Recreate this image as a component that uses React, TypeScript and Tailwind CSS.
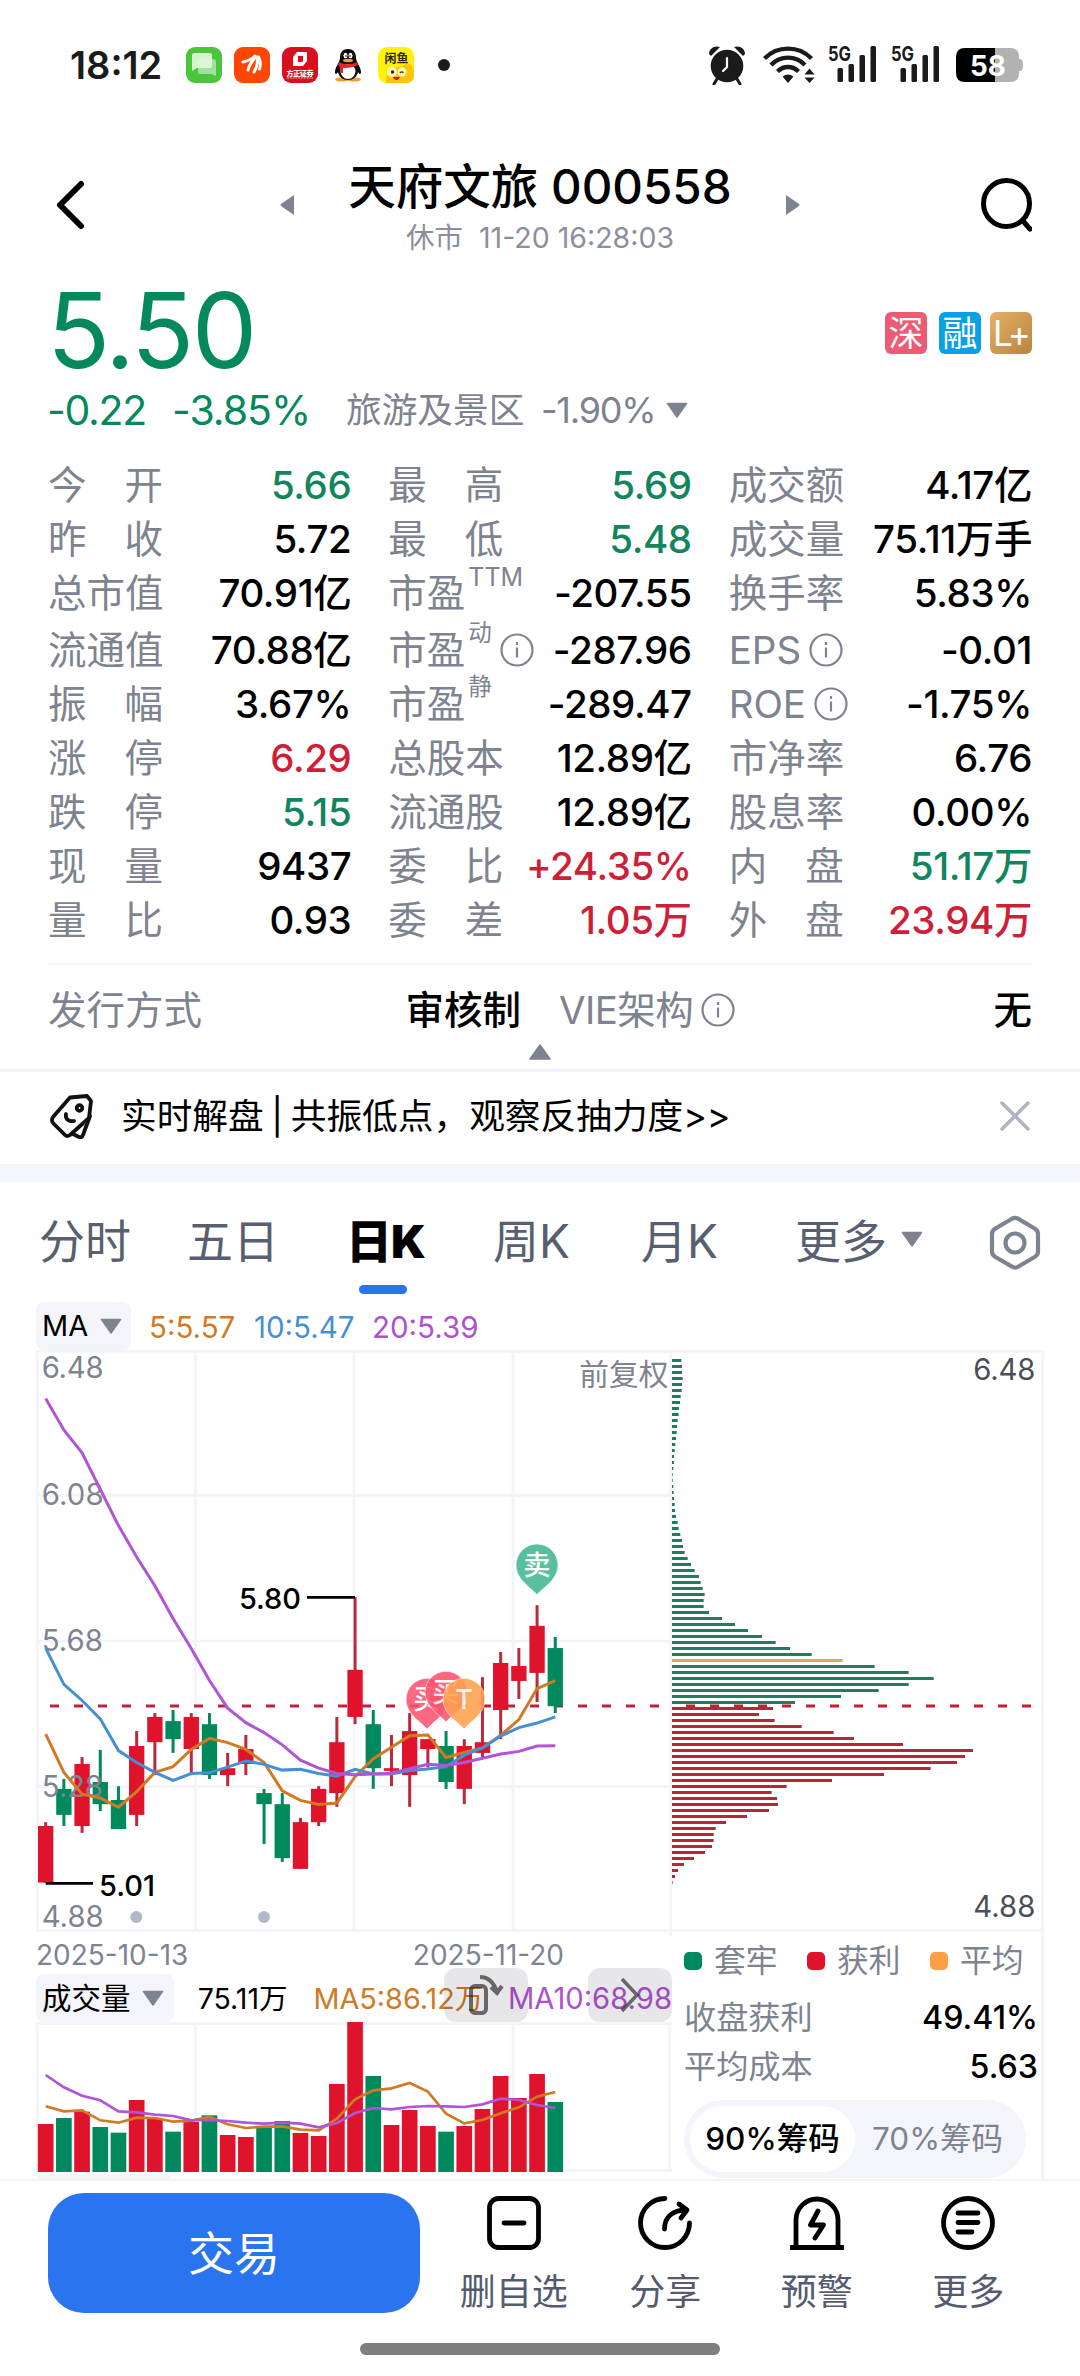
import { useState } from "react";

const UP = "#e0132c";
const DOWN = "#00895c";
const STEP = 54.6;
const FIRST = 137;
// price chart data is stored on a compressed vertical scale
const PRICE_SCALE = 1.148;

type Tone = "up" | "down" | "plain";

type Stat = {
  label: string;
  value: string;
  tone?: Tone;
  sup?: string;
  info?: boolean;
};

const statRows: Stat[][] = [
  [{ label: "今开", value: "5.66", tone: "down" }, { label: "最高", value: "5.69", tone: "down" }, { label: "成交额", value: "4.17亿" }],
  [{ label: "昨收", value: "5.72" }, { label: "最低", value: "5.48", tone: "down" }, { label: "成交量", value: "75.11万手" }],
  [{ label: "总市值", value: "70.91亿" }, { label: "市盈", sup: "TTM", value: "-207.55" }, { label: "换手率", value: "5.83%" }],
  [{ label: "流通值", value: "70.88亿" }, { label: "市盈", sup: "动", info: true, value: "-287.96" }, { label: "EPS", info: true, value: "-0.01" }],
  [{ label: "振幅", value: "3.67%" }, { label: "市盈", sup: "静", value: "-289.47" }, { label: "ROE", info: true, value: "-1.75%" }],
  [{ label: "涨停", value: "6.29", tone: "up" }, { label: "总股本", value: "12.89亿" }, { label: "市净率", value: "6.76" }],
  [{ label: "跌停", value: "5.15", tone: "down" }, { label: "流通股", value: "12.89亿" }, { label: "股息率", value: "0.00%" }],
  [{ label: "现量", value: "9437" }, { label: "委比", value: "+24.35%", tone: "up" }, { label: "内盘", value: "51.17万", tone: "down" }],
  [{ label: "量比", value: "0.93" }, { label: "委差", value: "1.05万", tone: "up" }, { label: "外盘", value: "23.94万", tone: "up" }],
];

// up?, wick top, body top, body bottom, wick bottom
const candles: [number, number, number, number, number][] = [
  [1, 1260, 1270, 1418, 1418],
  [0, 1147, 1173, 1241, 1270],
  [1, 1090, 1108, 1270, 1288],
  [0, 1071, 1155, 1213, 1231],
  [0, 1166, 1202, 1278, 1278],
  [1, 1022, 1061, 1241, 1270],
  [1, 975, 985, 1051, 1137],
  [0, 967, 996, 1043, 1079],
  [1, 975, 985, 1069, 1137],
  [0, 975, 1004, 1137, 1147],
  [1, 1079, 1119, 1137, 1166],
  [1, 1032, 1069, 1108, 1137],
  [0, 1173, 1184, 1213, 1317],
  [0, 1184, 1213, 1354, 1364],
  [1, 1249, 1260, 1382, 1382],
  [1, 1166, 1173, 1260, 1270],
  [1, 985, 1051, 1184, 1220],
  [1, 672, 862, 985, 1004],
  [0, 967, 1004, 1119, 1173],
  [1, 1032, 1119, 1126, 1166],
  [1, 975, 1022, 1137, 1220],
  [1, 1043, 1043, 1069, 1117],
  [0, 1022, 1061, 1155, 1173],
  [1, 1043, 1061, 1173, 1213],
  [1, 881, 1051, 1079, 1090],
  [1, 815, 844, 967, 1043],
  [1, 805, 852, 891, 938],
  [1, 693, 747, 870, 946],
  [0, 776, 805, 957, 975],
];

const ma5 = [1030, 1130, 1187, 1197, 1221, 1180, 1130, 1115, 1070, 1041, 1052, 1070, 1104, 1178, 1203, 1214, 1210, 1141, 1094, 1064, 1034, 1032, 1091, 1078, 1066, 1033, 992, 911, 890];
const ma10 = [805, 900, 942, 990, 1073, 1104, 1130, 1151, 1133, 1131, 1116, 1100, 1109, 1124, 1122, 1133, 1140, 1122, 1134, 1134, 1125, 1121, 1115, 1085, 1066, 1035, 1013, 1001, 985];
const ma20 = [153, 235, 295, 390, 485, 567, 642, 728, 806, 890, 962, 1000, 1026, 1058, 1098, 1119, 1133, 1136, 1134, 1132, 1120, 1109, 1112, 1104, 1093, 1082, 1075, 1061, 1060];

const volumeTops = [612, 594, 575, 621, 638, 540, 597, 635, 606, 586, 645, 651, 618, 603, 639, 648, 492, 306, 468, 615, 570, 618, 635, 618, 567, 468, 534, 462, 546];
const volMa5 = [559, 574, 571, 601, 608, 593, 594, 605, 602, 591, 613, 624, 620, 619, 629, 631, 596, 538, 511, 505, 489, 515, 581, 610, 600, 580, 562, 530, 516];
const volMa10 = [465, 502, 527, 541, 574, 577, 584, 588, 601, 600, 603, 608, 611, 608, 611, 622, 609, 579, 564, 568, 561, 558, 559, 561, 553, 536, 540, 555, 564];

const chips = [
  28, 30, 30, 32, 30, 29, 26, 24, 21, 20, 17, 15, 14, 12, 10, 8, 6, 6, 4, 2, 2, 4, 5, 6, 8, 9, 12, 17, 20, 25, 30, 33, 38, 47, 57, 68, 81, 86, 92, 98,
  95, 95, 111, 150, 189, 228, 270, 311, 354, 419, 512, 608, 710, 785, 710, 620, 507, 369, 303, 261, 308, 389, 485, 546, 693, 903, 879, 855, 776, 636,
  480, 344, 299, 315, 318, 291, 225, 162, 131, 125, 125, 120, 99, 66, 36, 18, 9, 2,
];
const AVG_CHIP = 50;
const CLOSE_CHIP = 58;

const toPoints = (ys: number[], scale = 1) => ys.map((y, i) => `${FIRST + STEP * i},${y * scale}`).join(" ");

const toneClass = (tone?: Tone) => {
  switch (tone) {
    case "up": return "text-[#cf1f38]";
    case "down": return "text-[#12855c]";
    default: return "text-black";
  }
};

function InfoIcon() {
  return (
    <svg className="w-[34px] h-[34px] shrink-0" viewBox="0 0 34 34" fill="none" stroke="#7e8390" strokeWidth="2.2">
      <circle cx="17" cy="17" r="15.5" />
      <path d="M17 14.5v10M17 9v3" />
    </svg>
  );
}

function Triangle({ up = false }: { up?: boolean }) {
  return (
    <svg className="w-[22px] h-4 shrink-0" viewBox="0 0 22 16" fill="#7e8390" stroke="#7e8390" strokeWidth="1.5" strokeLinejoin="round">
      <path d={up ? "M11 1 21 15H1z" : "M1.5 1.5h19L11 15z"} />
    </svg>
  );
}

function Signal() {
  return (
    <svg className="block w-[50px] h-[42px] overflow-visible" viewBox="0 0 50 42" fill="#1b1b1b">
      <text x="0" y="17" fontSize="20.5" fontWeight="700" textLength="23" lengthAdjust="spacingAndGlyphs">5G</text>
      <rect x="9.5" y="24" width="5.5" height="14" rx="1.5" />
      <rect x="20.5" y="20" width="5.5" height="18" rx="1.5" />
      <rect x="31.5" y="11" width="5.5" height="27" rx="1.5" />
      <rect x="42.5" y="2" width="5.5" height="36" rx="1.5" />
    </svg>
  );
}

function StatusBar() {
  return (
    <div className="h-[130px] pl-[70px] pr-[57px] flex items-center justify-between">
      <div className="flex items-center">
        <span className="w-[116px] text-[38px] font-semibold text-[#1b1b1b]">18:12</span>
        <svg className="w-[36px] h-[36px] mr-3" viewBox="0 0 36 36">
          <rect width="36" height="36" rx="9" fill="#4bc53c" />
          <path d="M14 12h13a3 3 0 0 1 3 3v14l-5-2H14a2 2 0 0 1-2-2V14a2 2 0 0 1 2-2z" fill="#9fe29b" />
          <path d="M8 6h16a2 2 0 0 1 2 2v11a2 2 0 0 1-2 2H11l-5 3V8a2 2 0 0 1 2-2z" fill="#e3f8e0" opacity=".9" />
        </svg>
        <svg className="w-[36px] h-[36px] mr-3" viewBox="0 0 36 36">
          <rect width="36" height="36" rx="9" fill="#ff4603" />
          <g fill="none" stroke="#fff" strokeWidth="3" strokeLinecap="round">
            <path d="M9 15c5-1 9-3 12-6" />
            <path d="M14 23c1-5 4-9 8-13" />
            <path d="M20 25c3-5 4-10 3.500-15" />
            <path d="M25.500 22c1.500-4 1-8-1-12" />
          </g>
        </svg>
        <svg className="w-[36px] h-[36px] mr-3" viewBox="0 0 36 36">
          <rect width="36" height="36" rx="9" fill="#d90f1e" />
          <path d="M15 5h10v9l-4 5H11V10zM16 9v6h4l1-1V9z" fill="#fff" fillRule="evenodd" />
          <text x="4.5" y="28.5" fontSize="7" fontWeight="900" fill="#fff" textLength="27">方正证券</text>
          <path d="M5 31h26" stroke="#fff" strokeWidth="1" strokeDasharray="2 .8" opacity=".7" />
        </svg>
        <svg className="w-[36px] h-[36px] mr-3" viewBox="0 0 36 36">
          <ellipse cx="12" cy="32.5" rx="7" ry="2" fill="#eaa22a" />
          <ellipse cx="24" cy="32.5" rx="7" ry="2" fill="#eaa22a" />
          <path d="M18 2c6 0 8 4 8 9 0 4 5 9 5 14 0 3-2 2-3 0-1 5-5 8-10 8S9 30 8 25c-1 2-3 3-3 0 0-5 5-10 5-14 0-5 2-9 8-9z" fill="#0b0b0b" />
          <ellipse cx="18" cy="24.5" rx="7.5" ry="7.5" fill="#fff" />
          <ellipse cx="15.5" cy="8.5" rx="2" ry="2.7" fill="#fff" />
          <ellipse cx="20.5" cy="8.5" rx="2" ry="2.7" fill="#fff" />
          <circle cx="16" cy="9" r=".8" />
          <circle cx="20" cy="9" r=".8" />
          <ellipse cx="18" cy="13.5" rx="5" ry="1.7" fill="#f5a623" />
          <path d="M9 15c5 3 13 3 18 0l1 3c-6 3-13 3-15 3v5h-3v-6l-2-2z" fill="#e1262c" />
        </svg>
        <svg className="w-[36px] h-[36px]" viewBox="0 0 36 36">
          <rect width="36" height="36" rx="9" fill="#fff20a" />
          <path d="M8 36C8 24 14 20 21 20c5 0 5-4 10-3 3 1 5 4 5 8v4q0 7-8 7z" fill="#ffc40e" />
          <circle cx="14" cy="25" r="5" fill="#fff7b5" />
          <circle cx="24" cy="25" r="4.5" fill="#fff7b5" />
          <circle cx="14.5" cy="25" r="1.7" fill="#3a2200" />
          <path d="M22 26c1-2 3-1 3 0" stroke="#3a2200" fill="none" strokeWidth="1.3" />
          <path d="M15 30h7c-1 4-6 4-7 0z" fill="#c3261b" />
          <text x="6.5" y="15.5" fontSize="12" fontWeight="700" fill="#2c2803" textLength="24">闲鱼</text>
        </svg>
        <span className="ml-6 w-3 h-3 rounded-full bg-[#1b1b1b]" />
      </div>
      <div className="flex items-center">
        <svg className="w-[38px] h-[40px] mr-[17px]" viewBox="0 0 38 40" fill="#1b1b1b">
          <circle cx="19" cy="21" r="16.3" />
          <path d="M1 9C1 4 6 0 12 2L3 11z" />
          <path d="M37 9c0-5-5-9-11-7l9 9z" />
          <path d="m9 34-3 5M29 34l3 5" stroke="#1b1b1b" strokeWidth="3" strokeLinecap="round" />
          <path d="M19 13v9l-4 4" stroke="#fff" strokeWidth="2.2" fill="none" strokeLinecap="round" />
        </svg>
        <svg className="w-[52px] h-[38px] mr-[13px]" viewBox="0 0 52 38" fill="none" stroke="#1b1b1b" strokeWidth="4.3">
          <path d="M1.5 12.5a33 33 0 0 1 47 0" />
          <path d="M8 19a23.5 23.5 0 0 1 34 0" />
          <path d="M14.5 25.5a14.5 14.5 0 0 1 21 0" />
          <path d="m25 37-5.5-6.5q5.5-4 11 0zM46.5 22.5l5 6h-10zM46.5 37l5-5.5h-10z" fill="#1b1b1b" stroke="none" />
        </svg>
        <span className="mr-[13px]"><Signal /></span>
        <span className="mr-[15px]"><Signal /></span>
        <svg className="w-[67px] h-[34px]" viewBox="0 0 67 34">
          <path d="M39 0h15q9 0 9 9v2h1q3 0 3 6t-3 6h-1v2q0 9-9 9H39z" fill="#b2b2b2" />
          <path d="M9 0h30v34H9q-9 0-9-9V9q0-9 9-9z" />
          <text x="14" y="27.5" fontSize="29" fontWeight="700" fill="#fff" textLength="36" lengthAdjust="spacingAndGlyphs">58</text>
        </svg>
      </div>
    </div>
  );
}

function Header() {
  return (
    <div className="h-[150px] px-12 flex items-center justify-between">
      <svg className="w-[54px] h-[54px]" viewBox="0 0 54 54" fill="none" stroke="#000" strokeWidth="6" strokeLinecap="round" strokeLinejoin="round">
        <path d="M33 6 12 27l21 21" />
      </svg>
      <div className="flex items-center justify-between w-[520px] h-[112px]">
        <svg className="w-[14px] h-5" viewBox="0 0 14 20" fill="#7e8390"><path d="M14 0v20L1 11q-1-1 0-2z" /></svg>
        <div className="flex flex-col items-center pt-[3px]">
          <h1 className="h-[62px] leading-[62px] text-[47.5px] font-medium text-black whitespace-nowrap">天府文旅 000558</h1>
          <p className="h-10 leading-10 text-[28.5px] text-[#8b8f9b]">休市&nbsp; 11-20 16:28:03</p>
        </div>
        <svg className="w-[14px] h-5" viewBox="0 0 14 20" fill="#7e8390"><path d="M0 0v20l13-9q1-1 0-2z" /></svg>
      </div>
      <svg className="w-[54px] h-[58px]" viewBox="0 0 54 58" fill="none" stroke="#000" strokeWidth="5" strokeLinecap="round">
        <circle cx="28.5" cy="27.5" r="23" />
        <path d="m45 45 7 8" />
      </svg>
    </div>
  );
}

function Quote() {
  return (
    <div className="h-[178px] pl-[47px] pr-12">
      <div className="flex items-center justify-between h-[104px]">
        <span className="h-[104px] text-[104px] leading-[100px] tracking-[-2.5px] text-[#03895b]">5.50</span>
        <div className="flex text-white text-[35px] leading-[42px] text-center mt-0.5">
          <span className="w-[42px] h-[42px] rounded-md bg-[#ec5a73] mr-3">深</span>
          <span className="w-[42px] h-[42px] rounded-md bg-[#0aa0e6] mr-[9px]">融</span>
          <span className="w-[42px] h-[42px] rounded-md bg-linear-to-br from-[#e8b067] to-[#b9843f] tracking-[-2px]">L+</span>
        </div>
      </div>
      <div className="flex items-center h-[52px] leading-[48px]">
        <span className="w-[125px] text-[41px] tracking-[-1.3px] text-[#03895b]">-0.22</span>
        <span className="w-[174px] text-[41px] tracking-[-1px] text-[#03895b]">-3.85%</span>
        <span className="w-[195px] text-[35.7px] text-[#7e8390]">旅游及景区</span>
        <span className="w-[125px] text-[36px] tracking-[-1.2px] text-[#7e8390]">-1.90%</span>
        <Triangle />
      </div>
    </div>
  );
}

function StatCell({ stat }: { stat: Stat }) {
  const spread = stat.label.length === 2 && !stat.sup;
  return (
    <div className="flex items-center justify-between h-[54px]">
      <div className="flex items-center h-[54px] text-[#7e8390]">
        {spread ? (
          <span className="flex justify-between w-[115px]"><span>{stat.label[0]}</span><span>{stat.label[1]}</span></span>
        ) : (
          <span>{stat.label}</span>
        )}
        {stat.sup && <span className={stat.sup === "TTM" ? "self-start ml-[3px] text-[25px] leading-[22px]" : "self-start ml-[3px] text-[23.5px] leading-[20px]"}>{stat.sup}</span>}
        {stat.info && <span className="ml-2"><InfoIcon /></span>}
      </div>
      <span className={`font-medium tracking-[-0.4px] ${toneClass(stat.tone)}`}>{stat.value}</span>
    </div>
  );
}

function Stats() {
  return (
    <div className="px-12 h-[505px] text-[38.5px] leading-[54px] whitespace-nowrap">
      {statRows.map((row, i) => (
        <div key={i} className={i === 3 ? "grid grid-cols-3 gap-x-[37px] h-[54px] mt-[3px]" : "grid grid-cols-3 gap-x-[37px] h-[54px]"}>
          {row.map((stat) => <StatCell key={stat.label + (stat.sup ?? "")} stat={stat} />)}
        </div>
      ))}
    </div>
  );
}

function IssueInfo() {
  return (
    <div className="h-[106px]">
      <div className="mx-12 border-t-2 border-[#f3f4f7] h-[78px] pt-[18px] grid grid-cols-2 gap-x-[38px] text-[38.5px] leading-[54px]">
        <div className="flex justify-between">
          <span className="text-[#7e8390]">发行方式</span>
          <span className="font-medium">审核制</span>
        </div>
        <div className="flex justify-between">
          <span className="flex items-center h-[54px] gap-2 text-[#7e8390]"><span className="tracking-[-0.6px]">VIE架构</span><InfoIcon /></span>
          <span className="font-medium">无</span>
        </div>
      </div>
      <div className="flex justify-center mt-[3px]"><Triangle up /></div>
    </div>
  );
}

function NewsStrip() {
  return (
    <div className="h-[95px] border-t-3 border-[#f3f4f7] px-[50px] pb-1 flex items-center">
      <svg className="w-[43px] h-[45px] mr-[28px]" viewBox="0 0 43 45" fill="none" stroke="#111" strokeWidth="3.8" strokeLinejoin="round" strokeLinecap="round">
        <path d="M20 3.5 37 2l4 5-2 17-19 17q-3 2-5 0L3 29q-2-3 0-6z" />
        <path d="m40 22-7 19q-1 3-4 2l-6-3" />
        <circle cx="29.5" cy="14" r="2.8" />
        <path d="M16 20c-1 5 3 8 8 7" />
      </svg>
      <p className="flex-1 text-[35.7px] leading-[50px] text-black whitespace-nowrap [word-spacing:-2.5px]">实时解盘 | 共振低点，观察反抽力度&gt;&gt;</p>
      <svg className="w-[30px] h-[30px]" viewBox="0 0 30 30" stroke="#adb3c1" strokeWidth="3.5" strokeLinecap="round"><path d="m2 2 26 26M28 2 2 28" /></svg>
    </div>
  );
}

const tabs = [
  { name: "分时", cell: "w-[148px]" },
  { name: "五日", cell: "w-[159px]" },
  { name: "日K", cell: "w-[147px]" },
  { name: "周K", cell: "w-[148px]" },
  { name: "月K", cell: "w-[154px]" },
  { name: "更多", cell: "w-[106px]" },
];

function Tabs() {
  const [active, setActive] = useState("日K");
  return (
    <div className="h-[120px] pl-[39px] pr-[39px] pb-0.5 flex items-center">
      {tabs.map((tab) => (
        <button key={tab.name} onClick={() => setActive(tab.name)} className={`${tab.cell} relative text-left text-[46px] leading-[66px] whitespace-nowrap`}>
          <span className={active === tab.name ? "font-black tracking-[-1px] text-black" : "text-[#585f70]"}>{tab.name}</span>
          {active === tab.name && <span className="absolute left-[13px] top-[77px] w-12 h-[9px] rounded-full bg-[#2b74f0]" />}
        </button>
      ))}
      <span className="-mt-1"><Triangle /></span>
      <svg className="w-[52px] h-[56px] ml-auto mt-1" viewBox="0 0 52 56" fill="none" stroke="#7e8390" strokeWidth="4.2" strokeLinejoin="round">
        <path d="M23 3.7q3-1.7 6 0l17 10q3 2 3 5v18q0 3-3 5l-17 10q-3 1.7-6 0l-17-10q-3-2-3-5v-18q0-3 3-5z" />
        <circle cx="26" cy="28" r="9.5" />
      </svg>
    </div>
  );
}

function MaRow() {
  return (
    <div className="flex items-center h-12 pl-9 text-[29.5px] leading-[50px]">
      <div className="flex items-center justify-between w-[95px] h-12 pl-[6px] pr-[9px] rounded-lg bg-[#f3f5fa] mr-[18px] text-[29px]">MA <Triangle /></div>
      <span className="w-[105px] pt-0.5 text-[#cf7a26]">5:5.57</span>
      <span className="w-[118px] pt-0.5 text-[#478fd4]">10:5.47</span>
      <span className="pt-0.5 text-[#ad52cf]">20:5.39</span>
    </div>
  );
}

function Pin({ x, y, fill, text }: { x: number; y: number; fill: string; text: string }) {
  return (
    <g transform={`translate(${x} ${y})`} opacity=".88">
      <path d="M0 89C-20 66-63 44-63 0a63 63 0 0 1 126 0c0 44-43 66-63 89z" fill={fill} stroke="#fff" strokeWidth="3" strokeOpacity=".6" />
      <text y="30" textAnchor="middle" fontSize="82" fontWeight="500" fill="#fff">{text}</text>
    </g>
  );
}

function KLineChart() {
  return (
    <svg className="block w-[672px] h-[596px]" viewBox="0 0 2016 1788">
      <g stroke="#f3f4f9" strokeWidth="8" fill="none">
        <path d="M108 34H2016M108 466H2008M108 903H2008M108 1340H2008M108 1771H2016" />
        <path d="M112 34V1771M586 34V1771M1062 34V1771M1539 34V1771M2012 34V1788" />
      </g>
      <path d="M150 1098H2008" stroke="#bd2238" strokeWidth="9" strokeDasharray="27 45" />
      {candles.map(([up, high, top, bottom, low], i) => {
        const x = FIRST + STEP * i;
        return (
          <g key={i} fill={up ? UP : DOWN}>
            <rect x={x - 4.5} y={high * PRICE_SCALE} width="9" height={(low - high) * PRICE_SCALE} fill={up ? "#b92a3c" : DOWN} />
            <rect x={x - 23} y={top * PRICE_SCALE} width="46" height={(bottom - top) * PRICE_SCALE} />
          </g>
        );
      })}
      <g fontSize="88" fill="#7e8390">
        <text x="125" y="115" textLength="186">6.48</text>
        <text x="125" y="496" textLength="186">6.08</text>
        <text x="125" y="934" textLength="184">5.68</text>
        <text x="125" y="1370" textLength="184">5.28</text>
        <text x="125" y="1762" textLength="186">4.88</text>
        <text x="1738" y="136" fontSize="89">前复权</text>
      </g>
      <g fill="none" strokeWidth="9">
        <polyline points={toPoints(ma5, PRICE_SCALE)} stroke="#d17a23" />
        <polyline points={toPoints(ma10, PRICE_SCALE)} stroke="#478fd4" />
        <polyline points={toPoints(ma20, PRICE_SCALE)} stroke="#b254d6" />
      </g>
      <path d="M921 772H1065M137 1630H279" stroke="#000" strokeWidth="8" />
      <g fontSize="87" fontWeight="500">
        <text x="717" y="808" textLength="186">5.80</text>
        <text x="297" y="1668" textLength="168">5.01</text>
      </g>
      <circle cx="409" cy="1731" r="18" fill="#b3b8c7" />
      <circle cx="792" cy="1731" r="18" fill="#b3b8c7" />
      <Pin x={1281} y={1078} fill="#fb5570" text="买" />
      <Pin x={1338} y={1057} fill="#fb5570" text="买" />
      <Pin x={1392} y={1078} fill="#ffa14f" text="T" />
      <Pin x={1611} y={675} fill="#42b891" text="卖" />
    </svg>
  );
}

function VolumeChart() {
  return (
    <svg className="block w-[672px] h-[151px]" viewBox="0 306 2016 453">
      <g stroke="#f3f4f9" strokeWidth="8" fill="none">
        <path d="M108 311H2016M108 752H2016M112 311V752M586 311V752M1062 311V752M1539 311V752M2008 311V752" />
      </g>
      {volumeTops.map((top, i) => (
        <rect key={i} x={FIRST + STEP * i - 23.5} y={top} width="47" height={756 - top} fill={candles[i][0] ? UP : DOWN} />
      ))}
      <g fill="none" strokeWidth="8">
        <polyline points={toPoints(volMa5)} stroke="#d17a23" />
        <polyline points={toPoints(volMa10)} stroke="#b254d6" />
      </g>
    </svg>
  );
}

function ChipChart() {
  const color = (i: number) => {
    if (i === AVG_CHIP) return "#e8a35c";
    return i < CLOSE_CHIP ? "#1f7d5e" : "#b52839";
  };
  return (
    <svg className="block w-[372px] h-[596px]" viewBox="2016 0 1116 1788">
      <path d="M2016 34H3128V1788M2016 1771H3128" stroke="#f3f4f9" strokeWidth="8" fill="none" />
      {chips.map((len, i) => (
        <rect key={i} x="2016" y={57 + 18 * i} width={len} height="9" fill={color(i)} />
      ))}
      <path d="M2058 1098H3100" stroke="#c51f36" strokeWidth="9" strokeDasharray="27 45" />
      <g fontSize="88" fill="#4a4f57" textAnchor="end">
        <text x="3106" y="121" textLength="186">6.48</text>
        <text x="3106" y="1732" textLength="186">4.88</text>
      </g>
    </svg>
  );
}

function SubIndicator() {
  return (
    <div className="relative flex items-center h-12 pl-9 text-[28.5px] whitespace-nowrap">
      <div className="flex items-center justify-between w-[138px] h-12 pl-[6px] pr-2.5 rounded-lg bg-[#f3f5fa] mr-6 text-[29.5px]">成交量 <Triangle /></div>
      <span className="w-[116px] pt-0.5">75.11万</span>
      <span className="w-[195px] pt-0.5 text-[28.8px] text-[#cf7a26]">MA5:86.12万</span>
      <span className="pt-0.5 text-[29.2px] text-[#ad52cf]">MA10:68.98</span>
      <span className="absolute left-[444px] -top-1.5 w-[84px] h-[54px] rounded-xl bg-[#10182a]/10 flex items-center justify-center">
        <svg className="w-[36px] h-[42px]" viewBox="0 0 36 42" fill="none" stroke="#222" strokeOpacity=".65" strokeWidth="4">
          <rect x="3" y="12" width="15" height="27" rx="4" />
          <path d="M12 3c8 0 14 6 17 15M23 13l6 6 5-7" />
        </svg>
      </span>
      <span className="absolute left-[588px] -top-1.5 w-[84px] h-[54px] rounded-xl bg-[#10182a]/10 flex items-center justify-center">
        <svg className="w-[20px] h-[36px]" viewBox="0 0 20 36" fill="none" stroke="#222" strokeOpacity=".65" strokeWidth="3.5"><path d="m2 2 15 16L2 34" /></svg>
      </span>
    </div>
  );
}

function ChipSummary() {
  const [range, setRange] = useState("90%筹码");
  return (
    <div className="w-[372px] h-[322px] border-r-3 border-[#f3f4f9] pl-3 pt-[1px] text-[32.2px] leading-[48px] text-[#7e8390] whitespace-nowrap">
      <div className="flex items-center h-12 text-[31.8px]">
        <span className="w-[18px] h-[18px] rounded-[5px] bg-[#00895c]" /><span className="w-[105px] pl-3">套牢</span>
        <span className="w-[18px] h-[18px] rounded-[5px] bg-[#e0132c]" /><span className="w-[105px] pl-3">获利</span>
        <span className="w-[18px] h-[18px] rounded-[5px] bg-[#ff9f45]" /><span className="pl-3">平均</span>
      </div>
      <div className="flex justify-between h-[49px] mt-[9px] pr-[3px]"><span>收盘获利</span><span className="font-medium text-black">49.41%</span></div>
      <div className="flex justify-between h-[49px] pr-[3px]"><span>平均成本</span><span className="font-medium text-black">5.63</span></div>
      <div className="mt-[8px] w-[342px] h-[78px] p-1.5 rounded-full bg-[#f3f5fa] flex">
        {["90%筹码", "70%筹码"].map((name) => (
          <button
            key={name}
            onClick={() => setRange(name)}
            className={range === name ? "w-[165px] h-[66px] rounded-full bg-white text-black font-medium text-[31.5px]" : "w-[165px] h-[66px] text-[31.5px]"}
          >
            {name}
          </button>
        ))}
      </div>
    </div>
  );
}

const actions = [
  { name: "删自选", icon: <><rect x="2.5" y="2.5" width="49" height="49" rx="9" /><path d="M17 27h20" /></> },
  { name: "分享", icon: <><path d="M27 2.5A24.5 24.5 0 1 0 51.5 27M26.5 33c0-12 8-19 22-19M41 8l8 6-6 8" /></> },
  { name: "预警", icon: <><path d="M6 51V24a21 21 0 0 1 42 0v27M1 51.5h52M28 15l-7.5 14h13L25 42" /></> },
  { name: "更多", icon: <><circle cx="27" cy="27" r="24.5" /><path d="M17 17h20M17 26.5h20M17 36h14" /></> },
];

function BottomBar() {
  return (
    <div className="h-[197px] border-t-2 border-[#f3f4f7] bg-white">
      <div className="flex h-[132px] pt-3 pl-12">
        <button className="w-[372px] h-[120px] rounded-[36px] bg-[#2b74f0] text-white text-[46px]">交易</button>
        <div className="flex pl-[18px]">
          {actions.map((action) => (
            <button key={action.name} className="w-[151.5px] pt-[2px] flex flex-col items-center">
              <svg className="w-[54px] h-[56px] shrink-0" viewBox="0 -1 54 56" fill="none" stroke="#000" strokeWidth="4.8" strokeLinecap="round" strokeLinejoin="round">{action.icon}</svg>
              <span className="mt-[14px] text-[36px] leading-[54px] text-[#545b6e]">{action.name}</span>
            </button>
          ))}
        </div>
      </div>
      <div className="mt-[30px] mx-auto w-[360px] h-3 rounded-full bg-[#7f7f7f]" />
    </div>
  );
}

export default function App() {
  return (
    <div className="w-[1080px] h-[2376px] overflow-hidden bg-white text-black font-['Inter','Noto_Sans_CJK_SC',sans-serif]">
      <StatusBar />
      <Header />
      <Quote />
      <Stats />
      <IssueInfo />
      <NewsStrip />
      <div className="h-[18px] bg-[#f3f5fa]" />
      <Tabs />
      <MaRow />
      {/* the chart frame tucks under the MA chip */}
      <div className="-mt-2.5 flex h-[839px] overflow-hidden">
        <div className="w-[672px]">
          <KLineChart />
          <div className="flex justify-between items-center h-[38px] pl-[36px] pr-[108px] text-[28px] leading-[36px] text-[#7e8390]">
            <span>2025-10-13</span>
            <span>2025-11-20</span>
          </div>
          <SubIndicator />
          <VolumeChart />
          <div className="ml-9 mt-[1px] w-[136px] h-12 rounded-lg bg-[#f3f5fa]" />
        </div>
        <div className="w-[372px]">
          <ChipChart />
          <ChipSummary />
        </div>
      </div>
      <BottomBar />
    </div>
  );
}
